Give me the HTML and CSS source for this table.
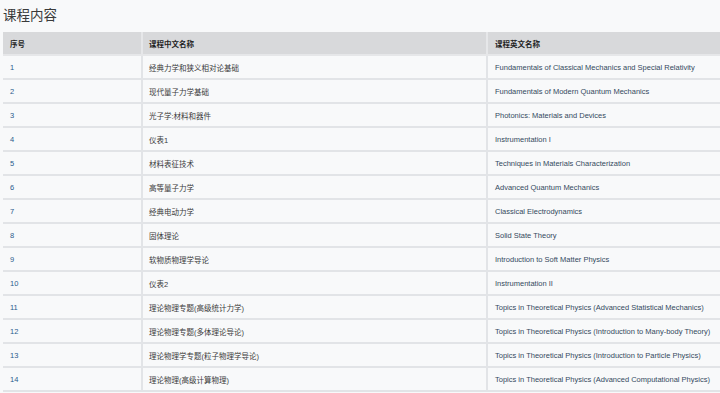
FILE: index.html
```html
<!DOCTYPE html>
<html lang="zh-CN">
<head>
    <meta charset="UTF-8">
    <meta name="viewport" content="width=device-width, initial-scale=1.0">
    <title>课程内容</title>
    <link rel="stylesheet" href="styles.css">
</head>
<body>
    <div class="course-section">
        <h2 class="section-title">课程内容</h2>
        <table class="course-table">
            <colgroup>
                <col class="col-no">
                <col class="col-cn">
                <col class="col-en">
            </colgroup>
            <thead>
                <tr>
                    <th>序号</th>
                    <th>课程中文名称</th>
                    <th>课程英文名称</th>
                </tr>
            </thead>
            <tbody>
                <tr><td class="num">1</td><td>经典力学和狭义相对论基础</td><td class="en">Fundamentals of Classical Mechanics and Special Relativity</td></tr>
                <tr><td class="num">2</td><td>现代量子力学基础</td><td class="en">Fundamentals of Modern Quantum Mechanics</td></tr>
                <tr><td class="num">3</td><td>光子学:材料和器件</td><td class="en">Photonics: Materials and Devices</td></tr>
                <tr><td class="num">4</td><td>仪表1</td><td class="en">Instrumentation I</td></tr>
                <tr><td class="num">5</td><td>材料表征技术</td><td class="en">Techniques in Materials Characterization</td></tr>
                <tr><td class="num">6</td><td>高等量子力学</td><td class="en">Advanced Quantum Mechanics</td></tr>
                <tr><td class="num">7</td><td>经典电动力学</td><td class="en">Classical Electrodynamics</td></tr>
                <tr><td class="num">8</td><td>固体理论</td><td class="en">Solid State Theory</td></tr>
                <tr><td class="num">9</td><td>软物质物理学导论</td><td class="en">Introduction to Soft Matter Physics</td></tr>
                <tr><td class="num">10</td><td>仪表2</td><td class="en">Instrumentation II</td></tr>
                <tr><td class="num">11</td><td>理论物理专题(高级统计力学)</td><td class="en">Topics in Theoretical Physics (Advanced Statistical Mechanics)</td></tr>
                <tr><td class="num">12</td><td>理论物理专题(多体理论导论)</td><td class="en">Topics in Theoretical Physics (Introduction to Many-body Theory)</td></tr>
                <tr><td class="num">13</td><td>理论物理学专题(粒子物理学导论)</td><td class="en">Topics in Theoretical Physics (Introduction to Particle Physics)</td></tr>
                <tr><td class="num">14</td><td>理论物理(高级计算物理)</td><td class="en">Topics in Theoretical Physics (Advanced Computational Physics)</td></tr>
            </tbody>
        </table>
    </div>
</body>
</html>
```

FILE: styles.css
```css
:root {
    --bg-color: #f8f9fa; --head-color: #d8d9db; --line-color: #e2e4e7;
    --text-color: #3a3a3a; --num-color: #2a5b8c; --en-color: #34495e;
}
html, body { margin: 0; padding: 0; background-color: var(--bg-color); overflow: hidden; }
body { font-family: 'Liberation Sans', 'Noto Sans CJK SC', sans-serif; color: var(--text-color); }
.course-section { padding: 0 0 0 3px; }
.section-title {
    margin: 0; height: 32px; line-height: 28px; font-size: 13.5px; font-weight: 400;
    font-family: 'Noto Sans CJK SC', sans-serif; color: #3a3a3a;
}
.course-table { border-collapse: collapse; table-layout: fixed; width: 100%; font-size: 7.5px; }
.col-no { width: 139px; }
.col-cn { width: 345px; }
.course-table th, .course-table td {
    height: 22px; padding: 0 6px; text-align: left; vertical-align: middle;
    border: 2px solid var(--line-color); border-top: none; border-left: none;
    white-space: nowrap; overflow: hidden;
}
.course-table th:last-child, .course-table td:last-child { border-right: none; }
.course-table th { background-color: var(--head-color); font-weight: 700; color: #222; border-color: #e6e7e9; }
.course-table td.num { color: var(--num-color); padding-left: 7px; }
.course-table th:first-child { padding-left: 7px; }
.course-table td.en { color: var(--en-color); padding-left: 7px; }
.course-table th:last-child { padding-left: 7px; }
```
